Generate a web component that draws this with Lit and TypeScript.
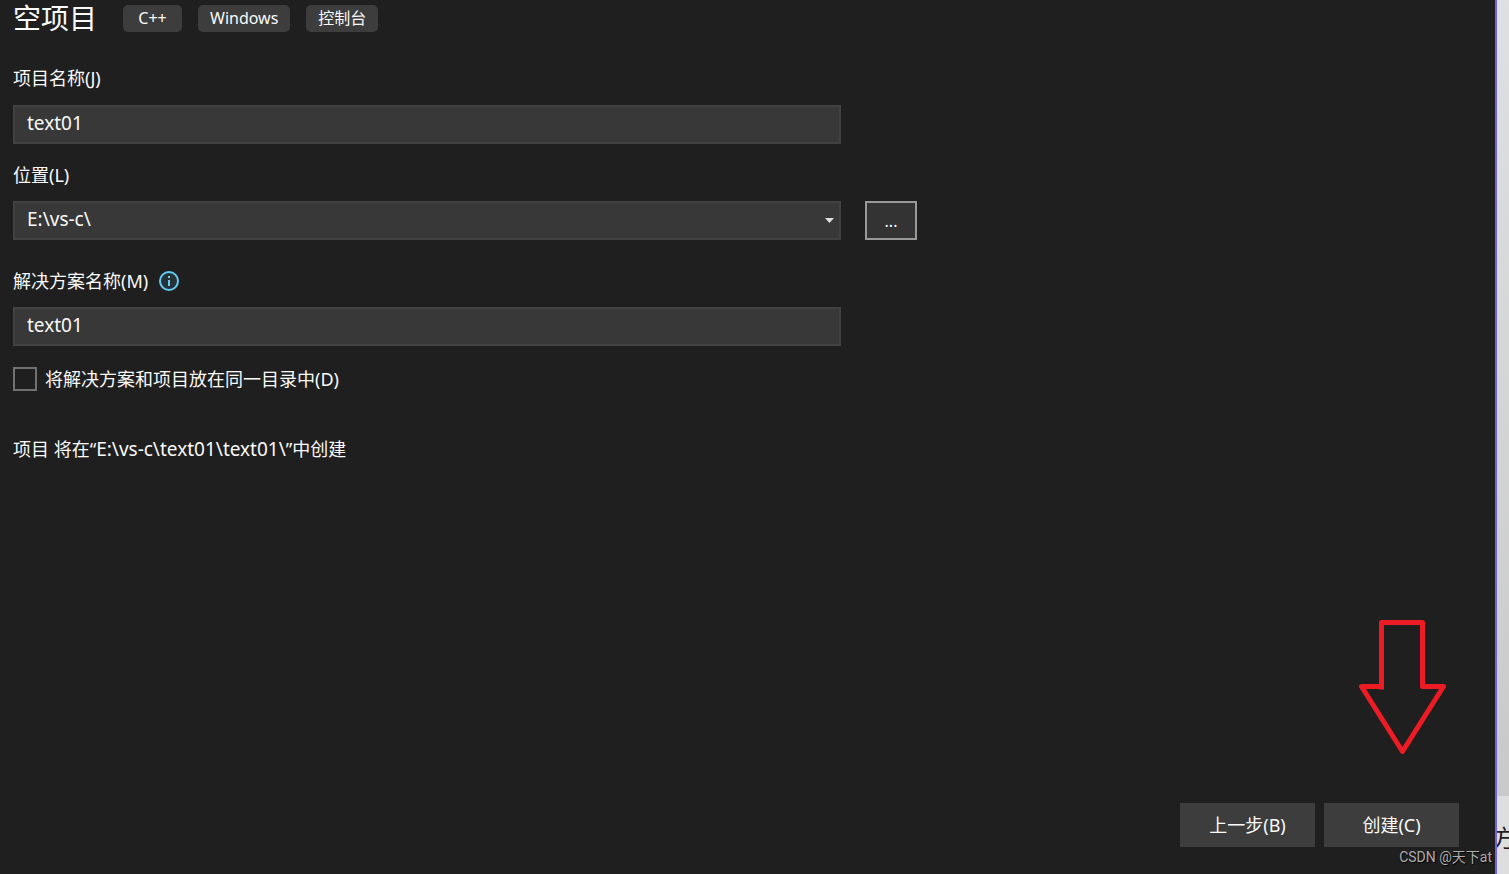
import { LitElement, html, css } from "lit";
import { customElement, state } from "lit/decorators.js";

@customElement("app-root")
export class AppRoot extends LitElement {
  static styles = css`
    :host {
      display: flex;
      min-height: 100vh;
      background: #1f1f1f;
      color: #fafafa;
      font: 18px/24px "Noto Sans", "Noto Sans CJK SC", sans-serif;
    }
    * {
      box-sizing: border-box;
    }
    .panel {
      position: relative;
      flex: 1;
      min-width: 0;
      display: flex;
      flex-direction: column;
      padding: 0 36px 27px 13px;
      border-right: 2px solid #7160e8;
    }
    .head {
      display: flex;
      align-items: center;
      margin-bottom: 30px;
    }
    .title {
      margin: 0 26px 0 0;
      font-size: 28px;
      line-height: 36px;
      font-weight: 400;
    }
    .tags {
      display: flex;
      gap: 16px;
      margin: 0;
      padding: 0;
      list-style: none;
    }
    .tag {
      min-width: 59px;
      padding: 1px 12px 2px;
      border-radius: 5px;
      background: #3d3d3d;
      font-size: 16px;
      line-height: 24px;
      text-align: center;
    }
    .fields {
      display: grid;
      grid-template-columns: minmax(0, 828px) 52px;
      column-gap: 24px;
    }
    .label {
      grid-column: 1 / -1;
      display: flex;
      align-items: center;
      gap: 11px;
      margin-bottom: 14px;
    }
    .label.first {
      margin-bottom: 15px;
    }
    .label.next {
      margin-top: 19px;
    }
    .label.group {
      margin-top: 29px;
    }
    .box {
      grid-column: 1;
      width: 100%;
      height: 39px;
      margin: 0;
      padding: 0 12px 3px;
      border: 2px solid #424242;
      border-radius: 0;
      outline: 0;
      background: #383838;
      color: inherit;
      font: inherit;
      font-size: 19px;
      appearance: none;
    }
    .combo {
      display: grid;
      align-items: center;
    }
    .combo > * {
      grid-area: 1 / 1;
    }
    .caret {
      justify-self: end;
      margin-right: 7px;
      pointer-events: none;
    }
    .browse {
      height: 39px;
      padding: 0;
      border: 2px solid #999;
      background: #333;
      color: inherit;
      font: inherit;
      font-size: 16px;
    }
    .check {
      display: flex;
      align-items: center;
      align-self: flex-start;
      gap: 8px;
      margin: 21px 0 46px;
    }
    .tick {
      width: 24px;
      height: 24px;
      margin: 0;
      border: 2px solid #717171;
      background: #1f1f1f;
      appearance: none;
    }
    .tick:checked {
      background: #7160e8;
    }
    .result {
      margin: 0;
    }
    .path {
      font-size: 19px;
    }
    .actions {
      display: flex;
      justify-content: flex-end;
      gap: 9px;
      margin-top: auto;
    }
    .action {
      width: 135px;
      height: 44px;
      padding: 0;
      border: 0;
      background: #3d3d3d;
      color: inherit;
      font: inherit;
    }
    .arrow {
      position: absolute;
      right: 48px;
      bottom: 119px;
    }
    .mark {
      position: absolute;
      right: 3px;
      bottom: 7px;
      color: #adadad;
      font: 14px/20px Roboto, "Noto Sans CJK SC", sans-serif;
      text-shadow: 1px 1px 1px #000;
    }
    .behind {
      display: flex;
      flex-direction: column;
      width: 12px;
      overflow: hidden;
      color: #1f1f1f;
    }
    .upper {
      flex: 1;
      background: linear-gradient(#dfe0e1, #c9c9c9);
    }
    .lower {
      height: 78px;
      padding-top: 26px;
      background: #dedede;
      font-size: 24px;
      line-height: 32px;
    }
    .glyph {
      display: block;
      margin-left: -5px;
    }
  `;

  @state() private project = "text01";
  @state() private solution = "text01";
  @state() private folder = "E:\\vs-c\\";

  render() {
    return html`
      <main class="panel">
        <header class="head">
          <h1 class="title">空项目</h1>
          <ul class="tags">
            ${["C++", "Windows", "控制台"].map((t) => html`<li class="tag">${t}</li>`)}
          </ul>
        </header>
        <div class="fields">
          <label class="label first" for="project">项目名称(J)</label>
          <input
            class="box"
            id="project"
            type="text"
            .value=${this.project}
            @input=${(e: Event) => (this.project = (e.target as HTMLInputElement).value)}
          />
          <label class="label next" for="folder">位置(L)</label>
          <div class="combo">
            <select class="box" id="folder">
              <option>${this.folder}</option>
            </select>
            <svg class="caret" width="9" height="5" viewBox="0 0 9 5" aria-hidden="true">
              <path d="M0 0h9L4.500 5z" fill="#dedede" />
            </svg>
          </div>
          <button class="browse" type="button" aria-label="浏览">...</button>
          <label class="label group" for="solution">
            解决方案名称(M)
            <svg width="20" height="20" viewBox="0 0 20 20" aria-hidden="true">
              <circle cx="10" cy="10" r="9" fill="#263238" stroke="#61cdf5" stroke-width="2" />
              <path d="M9 5h2v2H9zM9 9h2v6H9z" fill="#61cdf5" />
            </svg>
          </label>
          <input
            class="box"
            id="solution"
            type="text"
            .value=${this.solution}
            @input=${(e: Event) => (this.solution = (e.target as HTMLInputElement).value)}
          />
        </div>
        <label class="check">
          <input class="tick" type="checkbox" />
          <span>将解决方案和项目放在同一目录中(D)</span>
        </label>
        <p class="result">项目 将在“<span class="path">${this.folder}${this.solution}\\${this.project}\\</span>”中创建</p>
        <footer class="actions">
          <button class="action" type="button">上一步(B)</button>
          <button class="action" type="button">创建(C)</button>
        </footer>
        <svg class="arrow" width="88" height="136" viewBox="0 0 88 136" aria-hidden="true">
          <path
            d="M22.500 68V3.500H63.500V67.500H84.500L43.500 132.500L2.500 67.500H22.500"
            fill="none"
            stroke="#ed1c24"
            stroke-width="5"
            stroke-linejoin="round"
            stroke-linecap="square"
          />
        </svg>
        <span class="mark">CSDN @天下at</span>
      </main>
      <aside class="behind">
        <div class="upper"></div>
        <div class="lower"><span class="glyph">方</span></div>
      </aside>
    `;
  }
}
